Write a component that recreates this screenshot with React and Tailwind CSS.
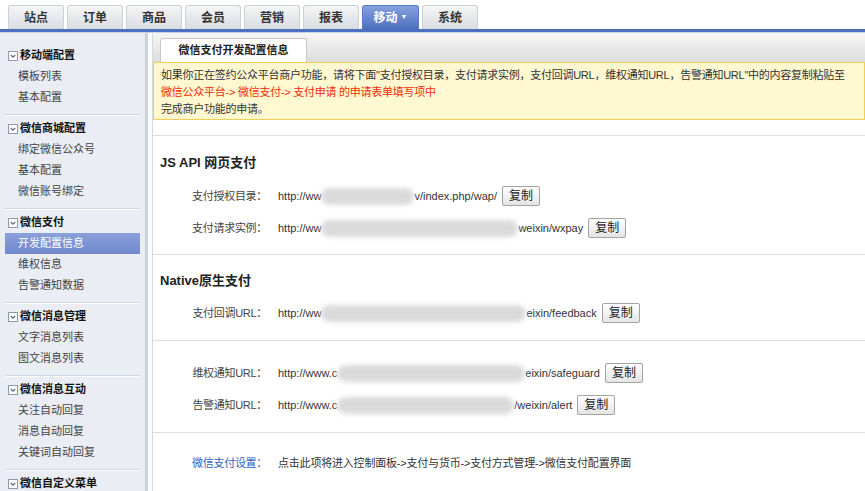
import React from "react";

const tabs = ["站点", "订单", "商品", "会员", "营销", "报表", "移动", "系统"];

const menu = [
  { title: "移动端配置", items: ["模板列表", "基本配置"] },
  { title: "微信商城配置", items: ["绑定微信公众号", "基本配置", "微信账号绑定"] },
  { title: "微信支付", items: ["开发配置信息", "维权信息", "告警通知数据"] },
  { title: "微信消息管理", items: ["文字消息列表", "图文消息列表"] },
  { title: "微信消息互动", items: ["关注自动回复", "消息自动回复", "关键词自动回复"] },
  { title: "微信自定义菜单", items: [] },
];

function FoldIcon() {
  return (
    <svg width="10" height="10" viewBox="0 0 10 10" className="shrink-0">
      <rect x="0.5" y="0.5" width="9" height="9" fill="#fff" stroke="#8d9bb0" />
      <path d="M2.8 4 L5 6.2 L7.2 4" fill="none" stroke="#5a6a80" strokeWidth="1.2" />
    </svg>
  );
}

function CopyBtn() {
  return (
    <button className="ml-[5px] h-[20px] w-[38px] shrink-0 rounded-[2px] border border-[#a3a3a3] bg-linear-to-b from-white to-[#e4e4e4] text-[12px] leading-none text-[#222]">
      复制
    </button>
  );
}

function Blur({ w }) {
  return (
    <span
      className="inline-block h-[17px] rounded-full bg-[#dadada] blur-[2.5px]"
      style={{ width: w }}
    />
  );
}

function Row({ label, prefix, blur, suffix }) {
  return (
    <div className="flex h-[32px] items-center">
      <div className="w-[114px] shrink-0 text-right tracking-[-0.3px] text-[#444]">{label}</div>
      <div className="ml-[11px] flex items-center whitespace-nowrap text-[#333]">
        <span>{prefix}</span>
        <Blur w={blur} />
        <span>{suffix}</span>
      </div>
      <CopyBtn />
    </div>
  );
}

export default function App() {
  return (
    <div className="h-[491px] w-[865px] overflow-hidden bg-white font-['Liberation_Sans','Noto_Sans_CJK_SC',sans-serif] text-[11px]">
      {/* top nav */}
      <div className="flex h-[29px] items-end gap-[3px] pl-[8px]">
        {tabs.map((t) =>
          t === "移动" ? (
            <div
              key={t}
              className="flex h-[24px] w-[57px] items-center justify-center rounded-t-[3px] border border-b-0 border-[#5a7cc6] bg-linear-to-b from-[#86a2dc] to-[#4c6fc0] text-[12px] font-bold text-white"
            >
              {t}
              <span className="ml-[3px] text-[7px]">▼</span>
            </div>
          ) : (
            <div
              key={t}
              className="flex h-[24px] w-[56px] items-center justify-center rounded-t-[3px] border border-b-0 border-[#cdd1d6] bg-linear-to-b from-[#f4f5f6] to-[#d9dde2] text-[12px] font-bold text-[#333]"
            >
              {t}
            </div>
          )
        )}
      </div>
      <div className="h-[3px] bg-[#4d70c0]" />
      <div className="h-[1px] bg-[#c9d2e2]" />

      <div className="flex h-[458px]">
        {/* sidebar */}
        <div className="w-[148px] shrink-0 border-r-[3px] border-[#cdd1d8] bg-[#eaedf3]">
          {menu.map((g, gi) => (
            <div
              key={g.title}
              className={`mx-[5px] border-b border-[#d2d9e5] pb-[6px] shadow-[0_1px_0_#fff] ${gi === 0 ? "pt-[12px]" : "pt-[3px]"}`}
            >
              <div className="flex h-[21px] items-center gap-[2px] pl-[3px] font-bold text-[#111]">
                <FoldIcon />
                <span>{g.title}</span>
              </div>
              {g.items.map((it) => (
                <div
                  key={it}
                  className={`flex h-[21px] items-center pl-[13px] ${
                    it === "开发配置信息" && gi === 2
                      ? "bg-linear-to-b from-[#8aa0da] to-[#6f88cc] text-white"
                      : "text-[#444]"
                  }`}
                >
                  {it}
                </div>
              ))}
            </div>
          ))}
        </div>

        {/* main */}
        <div className="flex-1 pl-[4px]">
          <div className="h-full border-l border-[#d9d9d9]">
            <div className="flex h-[29px] items-end bg-linear-to-b from-[#f6f6f6] to-[#dcdcdc] pl-[7px]">
              <div className="flex h-[24px] w-[147px] items-center justify-center rounded-t-[3px] border border-b-0 border-[#c8c8c8] bg-white font-bold text-[#222]">
                微信支付开发配置信息
              </div>
            </div>
            <div className="border border-[#f0cf55] bg-[#fff8d0] pt-[4px] pb-[1px] pl-[7px] leading-[17px] tracking-[-0.25px] text-[#333]">
              <div>
                如果你正在签约公众平台商户功能，请将下面"支付授权目录，支付请求实例，支付回调URL，维权通知URL，告警通知URL"中的内容复制粘贴至
              </div>
              <div className="text-[#f52a0a]">微信公众平台-&gt; 微信支付-&gt; 支付申请 的申请表单填写项中</div>
              <div>完成商户功能的申请。</div>
            </div>
            <div className="h-[16px] border-b border-[#dedede]" />

            <div className="border-b border-[#dedede] pt-[19px] pb-[10px]">
              <div className="h-[16px] pl-[7px] text-[13px] font-bold leading-[16px] text-[#222]">JS API 网页支付</div>
              <div className="mt-[9px]">
                <Row label="支付授权目录：" prefix="http://ww" blur={93} suffix="v/index.php/wap/" />
                <Row label="支付请求实例：" prefix="http://ww" blur={197} suffix="weixin/wxpay" />
              </div>
            </div>

            <div className="border-b border-[#dedede] pt-[18px] pb-[11px]">
              <div className="h-[16px] pl-[7px] text-[13px] font-bold leading-[16px] text-[#222]">Native原生支付</div>
              <div className="mt-[8px]">
                <Row label="支付回调URL：" prefix="http://ww" blur={205} suffix="eixin/feedback" />
              </div>
            </div>

            <div className="border-b border-[#dedede] pt-[16px] pb-[11px]">
              <Row label="维权通知URL：" prefix="http://www.c" blur={188} suffix="eixin/safeguard" />
              <Row label="告警通知URL：" prefix="http://www.c" blur={177} suffix="/weixin/alert" />
            </div>

            <div className="pt-[14px]">
              <div className="flex h-[32px] items-center">
                <div className="w-[114px] shrink-0 text-right tracking-[-0.3px] text-[#2d62c6]">微信支付设置：</div>
                <div className="ml-[11px] tracking-[-0.2px] text-[#333]">点击此项将进入控制面板-&gt;支付与货币-&gt;支付方式管理-&gt;微信支付配置界面</div>
              </div>
            </div>
          </div>
        </div>
      </div>
    </div>
  );
}
